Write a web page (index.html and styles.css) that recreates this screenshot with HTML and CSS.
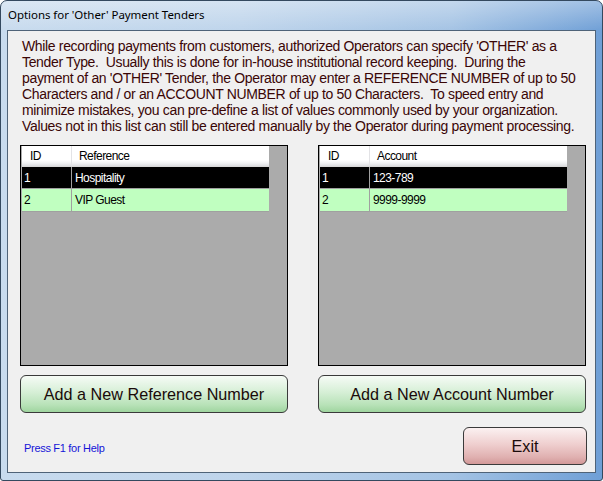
FILE: index.html
```html
<!DOCTYPE html>
<html>
<head>
<meta charset="utf-8">
<link rel="stylesheet" href="styles.css">
</head>
<body>
<div class="window">
  <div class="titlebar">Options for 'Other' Payment Tenders</div>
  <div class="client">
    <p class="intro">While recording payments from customers, authorized Operators can specify 'OTHER' as a<br>Tender Type.&nbsp; Usually this is done for in-house institutional record keeping.&nbsp; During the<br>payment of an 'OTHER' Tender, the Operator may enter a REFERENCE NUMBER of up to 50<br>Characters and / or an ACCOUNT NUMBER of up to 50 Characters.&nbsp; To speed entry and<br>minimize mistakes, you can pre-define a list of values commonly used by your organization.<br>Values not in this list can still be entered manually by the Operator during payment processing.</p>
    <div class="grids">
      <div class="grid">
        <div class="table">
          <div class="row head"><div class="c-id">ID</div><div class="c-val">Reference</div></div>
          <div class="row sel"><div class="c-id">1</div><div class="c-val">Hospitality</div></div>
          <div class="row alt"><div class="c-id">2</div><div class="c-val">VIP Guest</div></div>
        </div>
      </div>
      <div class="grid">
        <div class="table">
          <div class="row head"><div class="c-id">ID</div><div class="c-val">Account</div></div>
          <div class="row sel"><div class="c-id">1</div><div class="c-val">123-789</div></div>
          <div class="row alt"><div class="c-id">2</div><div class="c-val">9999-9999</div></div>
        </div>
      </div>
    </div>
    <div class="actions">
      <button class="btn green">Add a New Reference Number</button>
      <button class="btn green">Add a New Account Number</button>
    </div>
    <div class="footer">
      <span class="help">Press F1 for Help</span>
      <button class="btn red exit">Exit</button>
    </div>
  </div>
</div>
</body>
</html>
```
FILE: styles.css
```css
html, body {
  margin: 0;
  padding: 0;
  width: 603px;
  height: 481px;
  overflow: hidden;
  background: #ffffff;
}
.window {
  box-sizing: border-box;
  width: 603px;
  height: 481px;
  border: 1px solid #34495f;
  border-radius: 7px 7px 3px 3px;
  padding: 0 6px 7px 6px;
  display: flex;
  flex-direction: column;
  background:
    linear-gradient(to bottom, rgba(255,255,255,0.35) 0, rgba(255,255,255,0) 30px),
    linear-gradient(to right, #c8dbee 0%, #bed4eb 40%, #a4c3e4 75%, #6f9fd6 100%);
}
.titlebar {
  height: 29px;
  flex: none;
  box-sizing: border-box;
  padding: 6px 0 0 1px;
  font-family: "Noto Sans", "DejaVu Sans", sans-serif;
  font-size: 11.5px;
  letter-spacing: -0.05px;
  color: #000;
  line-height: 16px;
}
.client {
  flex: 1;
  border: 1px solid #4f6378;
  background: #f0f0f0;
  padding: 7px 8px 0 12px;
  display: flex;
  flex-direction: column;
}
.intro {
  margin: 0 0 0 2px;
  font-family: "Liberation Sans", Arial, sans-serif;
  font-size: 14px;
  letter-spacing: -0.34px;
  line-height: 16px;
  color: #3a0606;
  white-space: nowrap;
}
.grids {
  display: flex;
  gap: 30px;
  margin-top: 11px;
}
.grid {
  box-sizing: border-box;
  width: 268px;
  height: 221px;
  border: 1px solid #000;
  background: #ababab;
  padding: 0 0 0 1px;
}
.table {
  width: 247px;
  font-family: "Liberation Sans", Arial, sans-serif;
  font-size: 12px;
  letter-spacing: -0.55px;
}
.row {
  display: flex;
  height: 22px;
  box-sizing: border-box;
  align-items: center;
  border-bottom: 1px solid #a0a0a0;
}
.row .c-id {
  box-sizing: border-box;
  width: 50px;
  height: 100%;
  display: flex;
  align-items: center;
  padding-left: 2px;
  border-right: 1px solid #a0a0a0;
}
.row .c-val {
  flex: 1;
  padding-left: 3px;
}
.row.head {
  height: 21px;
  background: linear-gradient(to bottom, #ffffff 0%, #ffffff 70%, #f1f2f4 85%, #dcdde0 100%);
  border-bottom: 1px solid #d8d8d8;
  color: #000;
}
.row.head .c-id {
  padding-left: 8px;
  border-right: 1px solid #e3e3e6;
}
.row.head .c-val {
  padding-left: 7px;
}
.row.sel {
  background: #000;
  color: #fff;
}
.row.alt {
  background: #c0ffc0;
  color: #000;
  height: 23px;
}
.actions {
  display: flex;
  gap: 30px;
  margin-top: 9px;
}
.btn {
  box-sizing: border-box;
  border: 1px solid #3a3a3a;
  border-radius: 6px;
  font-family: "Liberation Sans", Arial, sans-serif;
  font-size: 16.2px;
  color: #1a0a0a;
  padding: 0;
  margin: 0;
  cursor: default;
}
.btn.green {
  width: 268px;
  height: 38px;
  background: linear-gradient(to bottom, #f6fbf6 0%, #d6efd6 45%, #b8e2b8 80%, #9fd59f 100%);
}
.btn.red {
  background: linear-gradient(to bottom, #fbf1f1 0%, #efcfcf 45%, #e0b1b1 80%, #d39999 100%);
}
.footer {
  display: flex;
  align-items: center;
  justify-content: space-between;
  margin-top: 14px;
}
.help {
  margin-left: 4px;
  margin-top: 4px;
  font-family: "Liberation Sans", Arial, sans-serif;
  font-size: 11px;
  letter-spacing: -0.3px;
  color: #1515d8;
}
.exit {
  width: 124px;
  height: 38px;
}
```
